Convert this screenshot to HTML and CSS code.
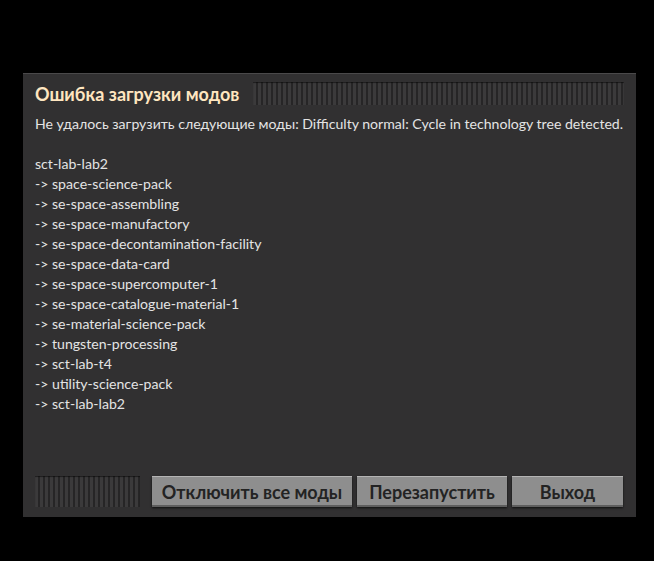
FILE: index.html
```html
<!DOCTYPE html>
<html lang="ru">
<head>
    <meta charset="UTF-8">
    <title>Ошибка загрузки модов</title>
    <link rel="stylesheet" href="styles.css">
</head>
<body>
<div class="dialog">
    <div class="header">
        <h1>Ошибка загрузки модов</h1>
        <div class="drag"></div>
    </div>
    <div class="message">
        <p>Не удалось загрузить следующие моды: Difficulty normal: Cycle in technology tree detected.</p>
        <p class="blank"></p>
        <p>sct-lab-lab2</p>
        <p>-&gt; space-science-pack</p>
        <p>-&gt; se-space-assembling</p>
        <p>-&gt; se-space-manufactory</p>
        <p>-&gt; se-space-decontamination-facility</p>
        <p>-&gt; se-space-data-card</p>
        <p>-&gt; se-space-supercomputer-1</p>
        <p>-&gt; se-space-catalogue-material-1</p>
        <p>-&gt; se-material-science-pack</p>
        <p>-&gt; tungsten-processing</p>
        <p>-&gt; sct-lab-t4</p>
        <p>-&gt; utility-science-pack</p>
        <p>-&gt; sct-lab-lab2</p>
    </div>
    <div class="footer">
        <div class="drag small"></div>
        <button class="btn wide">Отключить все моды</button>
        <button class="btn mid">Перезапустить</button>
        <button class="btn">Выход</button>
    </div>
</div>
</body>
</html>
```

FILE: styles.css
```css
* { box-sizing: border-box; }
body {
    margin: 0;
    background: #000;
    font-family: Lato, "Noto Sans", sans-serif;
    width: 654px;
    height: 561px;
    overflow: hidden;
}
.dialog {
    margin: 73px 0 0 23px;
    width: 613px;
    height: 444px;
    padding: 0 12px 10px 12px;
    background: #313031;
    border-top: 1px solid #4a494a;
    display: flex;
    flex-direction: column;
    box-shadow: 0 2px 4px rgba(0,0,0,0.6);
}
.header {
    display: flex;
    align-items: center;
    margin-top: 8px;
    height: 23px;
    margin-bottom: 9px;
}
.header h1 {
    margin: 1px 14px 0 0;
    font-size: 18px;
    font-weight: bold;
    color: #ffe6c0;
    white-space: nowrap;
}
.drag {
    flex: 1;
    height: 23px;
    background: repeating-linear-gradient(90deg, #3b3a3b 0 3px, #262526 3px 5px);
    box-shadow: inset 0 1px 1px rgba(0,0,0,0.5);
}
.message {
    flex: 1;
    color: #e4e4e4;
    font-size: 14.1px;
    line-height: 20px;
}
.message p {
    margin: 0;
    height: 20px;
    white-space: nowrap;
}
.footer {
    display: flex;
    align-items: center;
    gap: 5px;
    height: 31px;
}
.drag.small {
    flex: 0 0 105px;
    height: 31px;
    margin-right: 7px;
}
.btn {
    height: 31px;
    width: 111px;
    padding: 0;
    border: none;
    background: #8e8e8e;
    color: #232323;
    font-family: Lato, "Noto Sans", sans-serif;
    font-size: 18px;
    font-weight: bold;
    box-shadow: inset 0 1px 0 #b4b4b4, inset 0 -2px 0 #5e5e5e, 0 1px 2px rgba(0,0,0,0.7);
}
.btn.wide { width: 200px; }
.btn.mid { width: 150px; }
```
